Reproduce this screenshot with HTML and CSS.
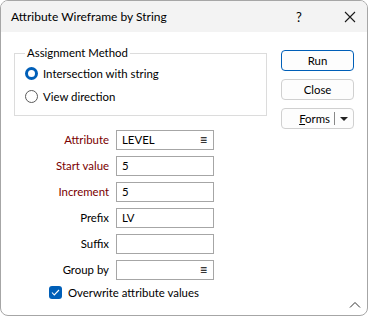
FILE: index.html
```html
<!DOCTYPE html>
<html>
<head>
<meta charset="utf-8">
<link rel="stylesheet" href="styles.css">
</head>
<body>
<div class="window">
  <div class="titlebar">
    <span class="title">Attribute Wireframe by String</span>
    <span class="help">?</span>
    <svg class="close-x" width="12" height="12" viewBox="0 0 12 12"><path d="M1 1L11 11M11 1L1 11" stroke="#1a1a1a" stroke-width="1.1" fill="none"/></svg>
  </div>
  <div class="content">
    <div class="main">
      <fieldset class="group">
        <legend>Assignment Method</legend>
        <label class="radio-row"><span class="radio on"></span>Intersection with string</label>
        <label class="radio-row"><span class="radio"></span>View direction</label>
      </fieldset>
      <div class="form">
        <span class="lbl req">Attribute</span>
        <div class="field">LEVEL<span class="list-ico">&#8801;</span></div>
        <span class="lbl req">Start value</span>
        <div class="field">5</div>
        <span class="lbl req">Increment</span>
        <div class="field">5</div>
        <span class="lbl">Prefix</span>
        <div class="field">LV</div>
        <span class="lbl">Suffix</span>
        <div class="field"></div>
        <span class="lbl">Group by</span>
        <div class="field"><span class="list-ico">&#8801;</span></div>
      </div>
      <label class="check-row"><span class="check"><svg width="9" height="7" viewBox="0 0 9 7"><path d="M1 3.5L3.3 6L8 1" stroke="#fff" stroke-width="1.1" fill="none"/></svg></span>Overwrite attribute values</label>
    </div>
    <div class="buttons">
      <div class="btn primary">Run</div>
      <div class="btn">Close</div>
      <div class="btn split"><span class="split-main"><u>F</u>orms</span><span class="split-sep"></span><span class="split-arrow"></span></div>
    </div>
  </div>
  <svg class="collapse" width="12" height="7" viewBox="0 0 12 7"><path d="M1 6.5L6 1.5L11 6.5" stroke="#333" stroke-width="1" fill="none"/></svg>
</div>
</body>
</html>
```
FILE: styles.css
```css
* { box-sizing: border-box; }
html, body { margin: 0; padding: 0; background: #fff; }
body {
  font-family: "Lato", "Noto Sans", sans-serif;
  font-size: 11.4px;
  color: #000;
}
.window {
  position: relative;
  width: 368px;
  height: 316px;
  border: 1px solid #a6a6a6;
  border-radius: 8px;
  overflow: hidden;
  background: #fff;
}
.titlebar {
  height: 31px;
  background: #f3f3f3;
  display: flex;
  align-items: center;
  padding-left: 10px;
}
.title { flex: 1; font-size: 12px; }
.help { width: 14px; margin-right: 34px; font-size: 13px; }
.close-x { margin-right: 11px; }
.content {
  display: flex;
  padding: 14px 0 0 13px;
}
.main { width: 253px; }
.group {
  margin: 0;
  width: 253px;
  height: 70px;
  border: 1px solid #dcdcdc;
  padding: 2px 0 0 10px;
}
.group legend {
  padding: 0 2px;
  margin-left: 0;
  line-height: 14px;
}
.radio-row {
  display: flex;
  align-items: center;
  height: 23px;
  gap: 5px;
}
.radio {
  width: 13px; height: 13px;
  border-radius: 50%;
  border: 1px solid #5a5a5a;
  background: #fff;
}
.radio.on {
  border: 3.5px solid #005fb8;
  background: #fff;
}
.form {
  display: grid;
  grid-template-columns: 95px 98px;
  column-gap: 7px;
  row-gap: 6px;
  margin-top: 14px;
}
.lbl {
  text-align: right;
  line-height: 20px;
}
.lbl.req { color: #7a0000; }
.field {
  height: 20px;
  border: 1px solid #a6a6a6;
  padding-left: 5px;
  line-height: 18px;
  display: flex;
  align-items: center;
}
.list-ico { margin-left: auto; margin-right: 6px; font-family: "Noto Sans", sans-serif; font-size: 12px; }
.check-row {
  display: flex;
  align-items: center;
  gap: 6px;
  margin: 6px 0 0 35px;
}
.check {
  width: 13px; height: 13px;
  border-radius: 3px;
  background: #005fb8;
  display: flex;
  align-items: center;
  justify-content: center;
}
.buttons {
  display: flex;
  flex-direction: column;
  gap: 8px;
  margin-left: 14px;
  padding-top: 4px;
}
.btn {
  width: 73px;
  height: 21px;
  border: 1px solid #d0d0d0;
  border-radius: 4px;
  display: flex;
  align-items: center;
  justify-content: center;
  background: #fdfdfd;
}
.btn.primary { border-color: #005fb8; }
.btn.split { justify-content: flex-start; }
.split-main { flex: 1; text-align: right; padding-right: 4px; }
.split-sep { width: 1px; height: 13px; background: #888; }
.split-arrow {
  width: 0; height: 0;
  border-left: 4px solid transparent;
  border-right: 4px solid transparent;
  border-top: 4px solid #222;
  margin: 0 5px 0 5px;
}
.collapse { position: absolute; right: 6px; bottom: 7px; }
```
